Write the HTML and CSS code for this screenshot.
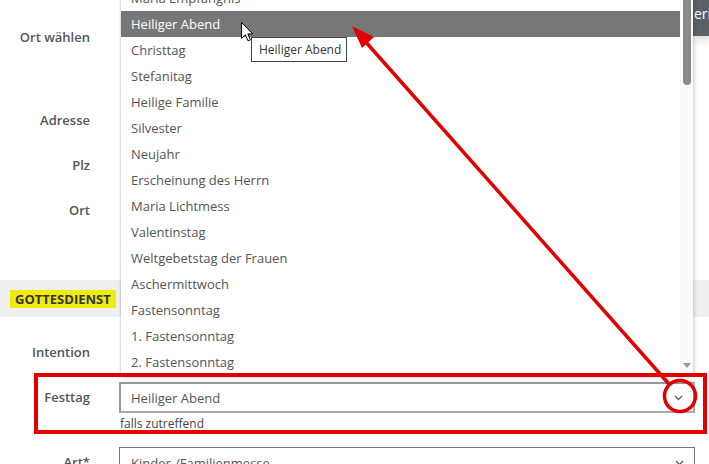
FILE: index.html
```html
<!DOCTYPE html>
<html lang="de">
<head>
<meta charset="utf-8">
<title>Gottesdienst</title>
<link rel="stylesheet" href="styles.css">
</head>
<body>
<div class="page">
  <form class="form">
    <div class="row"><label class="lbl lbl-cut">Veranstaltung</label><div class="field"></div></div>
    <div class="row row-ortwahl"><label class="lbl">Ort wählen</label>
      <div class="field field-flex"><div class="ghost"></div><div class="sidebtn">ern</div></div>
    </div>
    <div class="row"><label class="lbl">Adresse</label><div class="field"></div></div>
    <div class="row"><label class="lbl">Plz</label><div class="field"></div></div>
    <div class="row row-ort"><label class="lbl">Ort</label><div class="field"></div></div>
    <div class="band"><span class="tag">GOTTESDIENST</span></div>
    <div class="row"><label class="lbl">Intention</label><div class="field"></div></div>
    <div class="row row-festtag"><label class="lbl">Festtag</label>
      <div class="group">
        <div class="select select-focus"><span>Heiliger Abend</span><svg class="chev" width="9" height="6" viewBox="0 0 9 6"><polyline points="1,1 4.5,4.5 8,1" fill="none" stroke="#555" stroke-width="1.2"/></svg></div>
        <div class="hint">falls zutreffend</div>
      </div>
    </div>
    <div class="row"><label class="lbl">Art*</label>
      <div class="select"><span>Kinder-/Familienmesse</span><svg class="chev" width="9" height="6" viewBox="0 0 9 6"><polyline points="1,1 4.5,4.5 8,1" fill="none" stroke="#555" stroke-width="1.2"/></svg></div>
    </div>
  </form>

  <div class="dropdown">
    <ul class="options">
      <li>Maria Empfängnis</li>
      <li class="active">Heiliger Abend</li>
      <li>Christtag</li>
      <li>Stefanitag</li>
      <li>Heilige Familie</li>
      <li>Silvester</li>
      <li>Neujahr</li>
      <li>Erscheinung des Herrn</li>
      <li>Maria Lichtmess</li>
      <li>Valentinstag</li>
      <li>Weltgebetstag der Frauen</li>
      <li>Aschermittwoch</li>
      <li>Fastensonntag</li>
      <li>1. Fastensonntag</li>
      <li>2. Fastensonntag</li>
    </ul>
    <div class="scrollbar"><div class="thumb"></div><div class="arrow-down"></div></div>
  </div>

  <div class="tooltip">Heiliger Abend</div>
  <svg class="cursor" width="13" height="20" viewBox="0 0 13 20">
    <path d="M0.5,0.5 L0.5,16.5 L4.3,12.8 L7,18.8 L9.4,17.8 L6.8,11.9 L11.8,11.9 Z" fill="#fff" stroke="#000" stroke-width="1" stroke-linejoin="round"/>
  </svg>

  <svg class="annot" width="709" height="464" viewBox="0 0 709 464">
    <rect x="36" y="375" width="669" height="57" fill="none" stroke="#e00000" stroke-width="4"/>
    <circle cx="680" cy="396" r="15.5" fill="none" stroke="#e00000" stroke-width="3.5"/>
    <line x1="669" y1="384" x2="364" y2="40" stroke="#e00000" stroke-width="3.5"/>
    <polygon points="352,26 374,37 362,48" fill="#e00000"/>
  </svg>
</div>
</body>
</html>
```
FILE: styles.css
```css
html, body {
  margin: 0;
  padding: 0;
  background: #fff;
}
body {
  font-family: "Open Sans", "Liberation Sans", sans-serif;
  font-size: 13px;
  color: #555;
  overflow: hidden;
}
.page {
  position: relative;
  width: 709px;
  height: 464px;
  overflow: hidden;
}
.form {
  margin: -23px 0 0 0;
  display: flex;
  flex-direction: column;
}
.row {
  display: grid;
  grid-template-columns: 90px 1fr;
  column-gap: 29px;
  padding-right: 14px;
  margin-bottom: 14px;
}
.lbl {
  text-align: right;
  line-height: 31px;
  height: 31px;
  font-weight: 600;
  color: #555;
  white-space: nowrap;
}
.lbl-cut {
  line-height: 21px;
}
.field {
  height: 31px;
}
.field-flex {
  display: flex;
  align-items: flex-start;
}
.ghost { flex: 1; }
.sidebtn {
  width: 16px;
  height: 37px;
  margin: -23px -14px 0 0;
  background: #5b6166;
  color: #fff;
  font-size: 14px;
  line-height: 20px;
  padding-top: 5px;
  box-sizing: border-box;
  padding-left: 1px;
  overflow: hidden;
  white-space: nowrap;
  box-shadow: 0 4px 10px rgba(0,0,0,0.16);
}
.row-ortwahl { margin-bottom: 52px; }
.row-ort { margin-bottom: 54px; }
.band {
  height: 37px;
  background: #efefef;
  display: flex;
  align-items: center;
  padding-left: 10px;
  margin-bottom: 20px;
}
.tag {
  background: #efec0c;
  color: #333;
  font-weight: 700;
  font-size: 13px;
  line-height: 18px;
  padding: 0 5px;
}
.row-festtag { margin-bottom: 15px; }
.group {
  display: flex;
  flex-direction: column;
}
.select {
  height: 31px;
  box-sizing: border-box;
  border: 1px solid #777;
  display: flex;
  align-items: center;
  justify-content: space-between;
  padding: 0 10px 0 11px;
  color: #555;
  background: #fff;
}
.select-focus {
  border: 2px solid #aaa;
  border-top-color: #999;
  border-left-color: #999;
  padding-left: 10px;
  padding-right: 10px;
}
.chev { display: block; }
.hint {
  font-size: 12px;
  line-height: 16px;
  margin-top: 3px;
  color: #444;
  padding-left: 1px;
}
.dropdown {
  position: absolute;
  left: 121px;
  top: -15px;
  width: 572px;
  height: 390px;
  background: #fff;
  display: flex;
  box-shadow: 1px 2px 4px rgba(0,0,0,0.22), -1px 0 1px rgba(0,0,0,0.08);
  z-index: 5;
}
.options {
  list-style: none;
  margin: 0;
  padding: 0;
  flex: 1;
}
.options li {
  height: 26px;
  line-height: 26px;
  padding-left: 10px;
  color: #555;
  white-space: nowrap;
}
.options li.active {
  background: #777;
  color: #fff;
}
.scrollbar {
  width: 13px;
  background: #fafafa;
  display: flex;
  flex-direction: column;
  justify-content: space-between;
  align-items: center;
  padding-bottom: 7px;
  box-sizing: border-box;
}
.thumb {
  width: 8px;
  height: 100px;
  background: #8a8a8a;
  border-radius: 0 0 4px 4px;
  margin-left: 1px;
}
.arrow-down {
  width: 0;
  height: 0;
  border-left: 4px solid transparent;
  border-right: 4px solid transparent;
  border-top: 5px solid #999;
  margin-left: 1px;
}
.tooltip {
  position: absolute;
  left: 251px;
  top: 37px;
  width: 96px;
  height: 25px;
  box-sizing: border-box;
  border: 1px solid #444;
  background: #fff;
  color: #333;
  font-size: 12px;
  line-height: 23px;
  padding-left: 7px;
  white-space: nowrap;
  z-index: 6;
}
.cursor {
  position: absolute;
  left: 241px;
  top: 22px;
  z-index: 7;
}
.annot {
  position: absolute;
  left: 0;
  top: 0;
  z-index: 10;
  pointer-events: none;
}
```
